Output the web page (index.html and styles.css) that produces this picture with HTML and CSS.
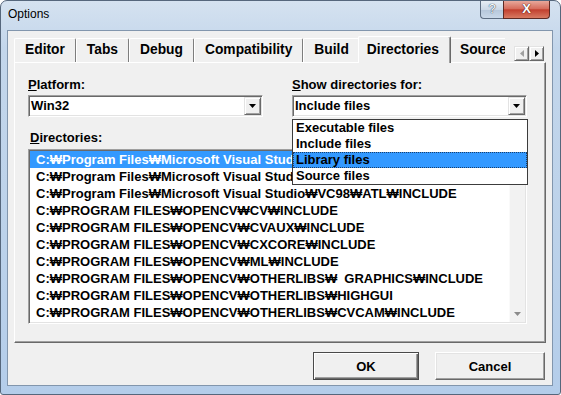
FILE: index.html
```html
<!DOCTYPE html>
<html lang="ko">
<head>
    <meta charset="UTF-8">
    <title>Options</title>
    <link rel="stylesheet" href="styles.css">
</head>
<body>
    <div class="window">
        <div class="titlebar">
            <span class="title">Options</span>
            <div class="caption-btns">
                <span class="cap-btn cap-help">?</span>
                <span class="cap-btn cap-close">X</span>
            </div>
        </div>

        <div class="client">
            <div class="tabstrip">
                <div class="tabs-view">
                    <span class="tab">Editor</span>
                    <span class="tab">Tabs</span>
                    <span class="tab">Debug</span>
                    <span class="tab">Compatibility</span>
                    <span class="tab">Build</span>
                    <span class="tab active">Directories</span>
                    <span class="tab">Source Control</span>
                </div>
                <div class="spin">
                    <span class="spin-btn">
                        <svg width="4" height="7" viewBox="0 0 4 7"><path d="M4 0 L0 3.5 L4 7 Z" fill="#a0a0a0"/></svg>
                    </span>
                    <span class="spin-btn">
                        <svg width="4" height="7" viewBox="0 0 4 7"><path d="M0 0 L4 3.5 L0 7 Z" fill="#000"/></svg>
                    </span>
                </div>
            </div>

            <div class="panel">
                <div class="fields">
                    <div class="field">
                        <label><u>P</u>latform:</label>
                        <div class="combo">
                            <span class="combo-text">Win32</span>
                            <span class="drop-btn">
                                <svg width="7" height="4" viewBox="0 0 7 4"><path d="M0 0 H7 L3.5 4 Z" fill="#000"/></svg>
                            </span>
                        </div>
                    </div>
                    <div class="field">
                        <label><u>S</u>how directories for:</label>
                        <div class="combo">
                            <span class="combo-text">Include files</span>
                            <span class="drop-btn">
                                <svg width="7" height="4" viewBox="0 0 7 4"><path d="M0 0 H7 L3.5 4 Z" fill="#000"/></svg>
                            </span>
                            <!-- 열린 드롭다운 목록 -->
                            <ul class="popup">
                                <li>Executable files</li>
                                <li>Include files</li>
                                <li class="picked">Library files</li>
                                <li>Source files</li>
                            </ul>
                        </div>
                    </div>
                </div>

                <label class="list-label"><u>D</u>irectories:</label>
                <div class="listbox">
                    <ul class="rows">
                        <li class="picked">C:₩Program Files₩Microsoft Visual Studio₩VC98₩INCLUDE</li>
                        <li>C:₩Program Files₩Microsoft Visual Studio₩VC98₩MFC₩INCLUDE</li>
                        <li>C:₩Program Files₩Microsoft Visual Studio₩VC98₩ATL₩INCLUDE</li>
                        <li>C:₩PROGRAM FILES₩OPENCV₩CV₩INCLUDE</li>
                        <li>C:₩PROGRAM FILES₩OPENCV₩CVAUX₩INCLUDE</li>
                        <li>C:₩PROGRAM FILES₩OPENCV₩CXCORE₩INCLUDE</li>
                        <li>C:₩PROGRAM FILES₩OPENCV₩ML₩INCLUDE</li>
                        <li>C:₩PROGRAM FILES₩OPENCV₩OTHERLIBS₩&nbsp; GRAPHICS₩INCLUDE</li>
                        <li>C:₩PROGRAM FILES₩OPENCV₩OTHERLIBS₩HIGHGUI</li>
                        <li>C:₩PROGRAM FILES₩OPENCV₩OTHERLIBS₩CVCAM₩INCLUDE</li>
                    </ul>
                    <div class="vscroll">
                        <span class="scroll-down">
                            <svg width="7" height="4" viewBox="0 0 7 4"><path d="M0 0 H7 L3.5 4 Z" fill="#8c8c8c"/></svg>
                        </span>
                    </div>
                </div>
            </div>

            <div class="buttons">
                <button class="btn btn-default btn-ok">OK</button>
                <button class="btn btn-cancel">Cancel</button>
            </div>
        </div>
    </div>
</body>
</html>
```

FILE: styles.css
```css
* {
    margin: 0;
    padding: 0;
    box-sizing: border-box;
}

body {
    width: 561px;
    height: 395px;
    overflow: hidden;
    background: #fff;
    font-family: "Liberation Sans", "Noto Sans CJK KR", Arial, sans-serif;
    font-size: 13px;
    font-weight: bold;
    color: #000;
}

ul {
    list-style: none;
}

/* 창 틀 */
.window {
    width: 561px;
    height: 395px;
    display: flex;
    flex-direction: column;
    border: 1px solid #56677c;
    border-radius: 7px 7px 3px 3px;
    padding: 0 7px 8px 6px;
    background: linear-gradient(180deg, #d5e2f0 0%, #c3d6eb 12%, #bcd2ea 60%, #b4cdea 100%);
}

.titlebar {
    height: 29px;
    display: flex;
    align-items: flex-start;
    padding-left: 1px;
}

.title {
    margin-top: 6px;
    font-size: 12px;
    font-weight: normal;
    line-height: 14px;
}

.caption-btns {
    margin-left: auto;
    margin-right: 3px;
    display: flex;
}

.cap-btn {
    height: 18px;
    border: 1px solid #5d6d82;
    border-top: none;
    text-align: center;
    font-size: 13px;
    line-height: 16px;
    color: #fff;
}

.cap-help {
    width: 23px;
    border-right: none;
    border-radius: 0 0 0 4px;
    background: linear-gradient(180deg, #e6edf5 0%, #cbd8e7 50%, #b5c6da 51%, #c9d8e9 100%);
    font-weight: normal;
    text-shadow: 0 0 1px #2f3e52, 0 0 1px #2f3e52;
}

.cap-close {
    width: 47px;
    border-color: #5e2a24;
    border-radius: 0 0 4px 0;
    background: linear-gradient(180deg, #e8a89b 0%, #d66d5d 45%, #c2402f 52%, #d87a62 100%);
    text-shadow: 0 0 1px #4a1510, 0 0 1px #4a1510;
}

/* 대화상자 본문 */
.client {
    flex: 1;
    display: flex;
    flex-direction: column;
    background: #f0f0f0;
    border: 1px solid #8296ad;
    padding: 5px 6px 5px 6px;
}

.tabstrip {
    height: 26px;
    display: flex;
    align-items: flex-end;
}

.tabs-view {
    flex: 1;
    height: 27px;
    margin-bottom: -1px;
    display: flex;
    align-items: flex-end;
    overflow: hidden;
    position: relative;
    z-index: 1;
}

.tab {
    flex-shrink: 0;
    margin-bottom: 1px;
    padding: 0 10px 1px 10px;
    font-size: 13.8px;
    line-height: 22px;
    border-top: 1px solid #fff;
    border-left: 1px solid #fff;
    border-right: 1px solid #7d7d7d;
    border-radius: 2px 2px 0 0;
    white-space: nowrap;
}

.tab.active {
    margin: 0 -2px;
    padding: 2px 11px 2px 8px;
    background: #f0f0f0;
    border-right-color: #696969;
    box-shadow: inset -1px 0 #a0a0a0;
    position: relative;
}

.spin {
    display: flex;
    margin: 0 2px 1px 9px;
}

.spin-btn {
    width: 15px;
    height: 15px;
    display: flex;
    align-items: center;
    justify-content: center;
    background: #f0f0f0;
    border: 1px solid;
    border-color: #e3e3e3 #696969 #696969 #e3e3e3;
    box-shadow: inset 1px 1px #fff, inset -1px -1px #a0a0a0;
}

.panel {
    border: 1px solid;
    border-color: #fff #696969 #696969 #fff;
    box-shadow: inset -1px -1px #a0a0a0;
    padding: 14px 18px 18px 13px;
}

.fields {
    display: grid;
    grid-template-columns: 1fr 1fr;
    column-gap: 29px;
}

label {
    display: block;
    line-height: 16px;
    margin-bottom: 2px;
    white-space: nowrap;
}

.combo {
    position: relative;
    height: 22px;
    display: flex;
    background: #fff;
    border: 1px solid;
    border-color: #a0a0a0 #fff #fff #a0a0a0;
    box-shadow: inset 1px 1px #696969, inset -1px -1px #e3e3e3;
}

.combo-text {
    flex: 1;
    padding-left: 2px;
    line-height: 20px;
}

.drop-btn {
    width: 17px;
    margin: 1px 1px 1px 0;
    display: flex;
    align-items: center;
    justify-content: center;
    background: #f0f0f0;
    border: 1px solid;
    border-color: #e3e3e3 #696969 #696969 #e3e3e3;
    box-shadow: inset 1px 1px #fff, inset -1px -1px #a0a0a0;
}

.popup {
    position: absolute;
    top: 23px;
    left: -1px;
    right: -2px;
    z-index: 5;
    background: #fff;
    border: 1px solid #3c3c3c;
}

.popup li {
    padding-left: 3px;
    line-height: 16px;
}

.popup li.picked {
    background: #3399ff;
    outline: 1px dotted #1a3f6a;
    outline-offset: -1px;
}

.list-label {
    margin-top: 13px;
    margin-bottom: 3px;
    padding-left: 2px;
}

.listbox {
    height: 175px;
    display: flex;
    background: #fff;
    border: 1px solid;
    border-color: #a0a0a0 #fff #fff #a0a0a0;
    box-shadow: inset 1px 1px #696969, inset -1px -1px #e3e3e3;
    padding: 1px 0 0 1px;
}

.rows {
    flex: 1;
    overflow: hidden;
}

.rows li {
    padding-left: 6px;
    line-height: 17px;
    white-space: nowrap;
    overflow: hidden;
}

.rows li.picked {
    background: #3399ff;
    color: #fff;
}

.vscroll {
    width: 16px;
    margin: 0 1px 1px 0;
    display: flex;
    flex-direction: column;
    justify-content: flex-end;
    background: #f2f2f2;
    border-left: 1px solid #fafafa;
}

.scroll-down {
    height: 16px;
    display: flex;
    align-items: center;
    justify-content: center;
}

/* 하단 버튼 */
.buttons {
    margin-top: 9px;
    display: flex;
    justify-content: flex-end;
    gap: 16px;
    padding-right: 1px;
}

.btn {
    height: 28px;
    font: inherit;
    color: #000;
    background: #f0f0f0;
    border: 1px solid;
    border-color: #fff #696969 #696969 #fff;
    box-shadow: inset -1px -1px #a0a0a0, inset 1px 1px #e3e3e3;
}

.btn-ok {
    width: 106px;
}

.btn-cancel {
    width: 110px;
}

.btn-default {
    border-color: #4a4a4a;
    box-shadow: inset 1px 1px #fff, inset -1px -1px #696969, inset -2px -2px #a0a0a0;
}
```
